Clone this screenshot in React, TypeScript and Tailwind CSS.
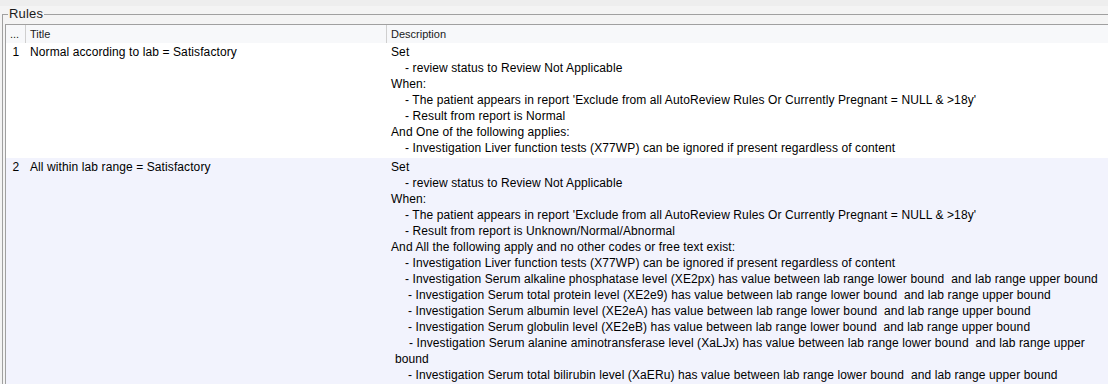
import React from "react";

type Line = { text: string; indent?: "none" | "one" | "two" | "wrap" };

const rules: { id: number; title: string; lines: Line[] }[] = [
  {
    id: 1,
    title: "Normal according to lab = Satisfactory",
    lines: [
      { text: "Set" },
      { text: "- review status to Review Not Applicable", indent: "one" },
      { text: "When:" },
      {
        text: "- The patient appears in report 'Exclude from all AutoReview Rules Or Currently Pregnant = NULL & >18y'",
        indent: "one",
      },
      { text: "- Result from report is Normal", indent: "one" },
      { text: "And One of the following applies:" },
      {
        text: "- Investigation Liver function tests (X77WP) can be ignored if present regardless of content",
        indent: "one",
      },
    ],
  },
  {
    id: 2,
    title: "All within lab range = Satisfactory",
    lines: [
      { text: "Set" },
      { text: "- review status to Review Not Applicable", indent: "one" },
      { text: "When:" },
      {
        text: "- The patient appears in report 'Exclude from all AutoReview Rules Or Currently Pregnant = NULL & >18y'",
        indent: "one",
      },
      { text: "- Result from report is Unknown/Normal/Abnormal", indent: "one" },
      { text: "And All the following apply and no other codes or free text exist:" },
      {
        text: "- Investigation Liver function tests (X77WP) can be ignored if present regardless of content",
        indent: "one",
      },
      {
        text: "- Investigation Serum alkaline phosphatase level (XE2px) has value between lab range lower bound  and lab range upper bound",
        indent: "one",
      },
      {
        text: "- Investigation Serum total protein level (XE2e9) has value between lab range lower bound  and lab range upper bound",
        indent: "two",
      },
      {
        text: "- Investigation Serum albumin level (XE2eA) has value between lab range lower bound  and lab range upper bound",
        indent: "two",
      },
      {
        text: "- Investigation Serum globulin level (XE2eB) has value between lab range lower bound  and lab range upper bound",
        indent: "two",
      },
      {
        text: "- Investigation Serum alanine aminotransferase level (XaLJx) has value between lab range lower bound  and lab range upper bound",
        indent: "wrap",
      },
      {
        text: "- Investigation Serum total bilirubin level (XaERu) has value between lab range lower bound  and lab range upper bound",
        indent: "two",
      },
    ],
  },
];

const indentClass = (indent: Line["indent"]) => {
  if (indent === "one") return "pl-[14px]";
  if (indent === "two") return "pl-[17px]";
  if (indent === "wrap") return "pl-[4px] indent-[14px]";
  return "";
};

const App = () => {
  return (
    <div className="h-[384px] w-[1108px] overflow-hidden bg-[#f4f4f4] font-['Liberation_Sans',Arial,sans-serif] text-black">
      <div className="h-[6px] bg-[#eeeeee]" />
      <fieldset className="ml-[2px] border-t border-l border-[#a0a0a0] pt-[2px] pl-[2px]">
        <legend className="ml-[3px] px-[1px] text-[13px] leading-[16px] tracking-[0.2px] text-[#1a1a1a]">Rules</legend>

        <div className="border-t border-l border-[#a0a0a0] bg-white">
          <div className="flex h-[18px] items-center bg-[#f7f8fa] text-[11px] leading-[18px] text-[#1a1a1a]">
            <div className="h-full w-[20px] shrink-0 border-r border-[#cfcfcf] pl-[4px]">...</div>
            <div className="h-full w-[361px] shrink-0 border-r border-[#cfcfcf] pl-[4px]">Title</div>
            <div className="h-full flex-1 pl-[4px]">Description</div>
          </div>

          {rules.map((rule, i) => (
            <div
              key={rule.id}
              className={`flex pt-[1px] pb-[2px] text-[12px] leading-[16px] tracking-[0.1px] ${i % 2 === 1 ? "bg-[#f2f3fd]" : "bg-white"}`}
            >
              <div className="w-[20px] shrink-0 text-center">{rule.id}</div>
              <div className="w-[361px] shrink-0 pl-[4px]">{rule.title}</div>
              <div className="flex-1 pl-[4px] pr-[2px]">
                {rule.lines.map((line, j) => (
                  <div key={j} className={`whitespace-pre-wrap ${indentClass(line.indent)}`}>
                    {line.text}
                  </div>
                ))}
              </div>
            </div>
          ))}
        </div>
      </fieldset>
    </div>
  );
};

export default App;
